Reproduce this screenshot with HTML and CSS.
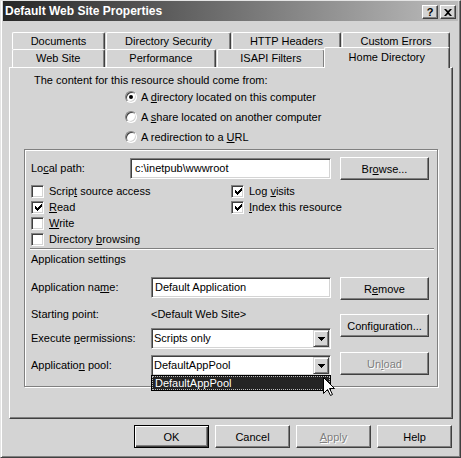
FILE: index.html
```html
<!DOCTYPE html>
<html lang="en">
<head>
    <meta charset="UTF-8">
    <title>Default Web Site Properties</title>
    <link rel="stylesheet" href="styles.css">
</head>
<body>
    <div class="window">
        <div class="titlebar">
            <span class="title">Default Web Site Properties</span>
            <div class="caption-buttons">
                <button class="caption-btn">?</button>
                <button class="caption-btn">
                    <svg width="8" height="7" viewBox="0 0 8 7"><path d="M0 0h2l2 2 2-2h2L5 3.5 8 7H6L4 5 2 7H0l3-3.5z" fill="#000"/></svg>
                </button>
            </div>
        </div>

        <div class="dialog">
            <div class="tabs">
                <div class="tab-row back">
                    <div class="tab tab-documents">Documents</div>
                    <div class="tab tab-security">Directory Security</div>
                    <div class="tab tab-headers">HTTP Headers</div>
                    <div class="tab tab-errors">Custom Errors</div>
                </div>
                <div class="tab-row front">
                    <div class="tab tab-website">Web Site</div>
                    <div class="tab tab-performance">Performance</div>
                    <div class="tab tab-isapi">ISAPI Filters</div>
                    <div class="tab tab-home active">Home Directory</div>
                </div>
            </div>

            <div class="panel">
                <p class="intro">The content for this resource should come from:</p>
                <div class="radio-list">
                    <div class="radio-row"><span class="radio checked"></span><span>A <u>d</u>irectory located on this computer</span></div>
                    <div class="radio-row"><span class="radio"></span><span>A <u>s</u>hare located on another computer</span></div>
                    <div class="radio-row"><span class="radio"></span><span>A redirection to a <u>U</u>RL</span></div>
                </div>

                <div class="groupbox">
                    <div class="path-row">
                        <span class="path-label">Lo<u>c</u>al path:</span>
                        <div class="textbox path-input">c:\inetpub\wwwroot</div>
                        <button class="btn side-btn"><span>Br<u>o</u>wse...</span></button>
                    </div>

                    <div class="checks">
                        <div class="check-col">
                            <div class="check-row"><span class="checkbox"></span><span>Scrip<u>t</u> source access</span></div>
                            <div class="check-row"><span class="checkbox checked"><svg width="7" height="7" viewBox="0 0 7 7"><path d="M0 2h1v1h1v1h1V3h1V2h1V1h1V0h1v3H6v1H5v1H4v1H3v1H2V6H1V5H0z" fill="#000"/></svg></span><span><u>R</u>ead</span></div>
                            <div class="check-row"><span class="checkbox"></span><span><u>W</u>rite</span></div>
                            <div class="check-row"><span class="checkbox"></span><span>Directory <u>b</u>rowsing</span></div>
                        </div>
                        <div class="check-col">
                            <div class="check-row"><span class="checkbox checked"><svg width="7" height="7" viewBox="0 0 7 7"><path d="M0 2h1v1h1v1h1V3h1V2h1V1h1V0h1v3H6v1H5v1H4v1H3v1H2V6H1V5H0z" fill="#000"/></svg></span><span>Log <u>v</u>isits</span></div>
                            <div class="check-row"><span class="checkbox checked"><svg width="7" height="7" viewBox="0 0 7 7"><path d="M0 2h1v1h1v1h1V3h1V2h1V1h1V0h1v3H6v1H5v1H4v1H3v1H2V6H1V5H0z" fill="#000"/></svg></span><span><u>I</u>ndex this resource</span></div>
                        </div>
                    </div>

                    <div class="separator"></div>
                    <div class="section-title">Application settings</div>

                    <div class="app-settings">
                        <div class="app-fields">
                            <div class="field-row row-name">
                                <span class="field-label">Application na<u>m</u>e:</span>
                                <div class="textbox field-control">Default Application</div>
                            </div>
                            <div class="field-row row-start">
                                <span class="field-label">Starting point:</span>
                                <span class="field-value">&lt;Default Web Site&gt;</span>
                            </div>
                            <div class="field-row row-exec">
                                <span class="field-label">Execute <u>p</u>ermissions:</span>
                                <div class="combo field-control">
                                    <span class="combo-text">Scripts only</span>
                                    <span class="combo-btn"><svg width="7" height="4" viewBox="0 0 7 4"><path d="M0 0h7v1H6v1H5v1H4v1H3V3H2V2H1V1H0z" fill="#000"/></svg></span>
                                </div>
                            </div>
                            <div class="field-row row-pool">
                                <span class="field-label">Applicatio<u>n</u> pool:</span>
                                <div class="combo field-control open">
                                    <span class="combo-text">DefaultAppPool</span>
                                    <span class="combo-btn"><svg width="7" height="4" viewBox="0 0 7 4"><path d="M0 0h7v1H6v1H5v1H4v1H3V3H2V2H1V1H0z" fill="#000"/></svg></span>
                                    <div class="dropdown">
                                        <div class="dropdown-item">DefaultAppPool</div>
                                    </div>
                                    <svg class="cursor" width="12" height="20" viewBox="0 0 12 20"><path d="M0.5 0.5V16.5L4.5 12.5L7.5 18.5L9.5 17.5L6.5 11.5H11.5Z" fill="#fff" stroke="#000"/></svg>
                                </div>
                            </div>
                        </div>
                        <div class="app-buttons">
                            <button class="btn side-btn"><span>R<u>e</u>move</span></button>
                            <button class="btn side-btn btn-config"><span>Confi<u>g</u>uration...</span></button>
                            <button class="btn side-btn btn-unload disabled"><span>Un<u>l</u>oad</span></button>
                        </div>
                    </div>
                </div>
            </div>

            <div class="dialog-buttons">
                <button class="btn dlg-btn default">OK</button>
                <button class="btn dlg-btn">Cancel</button>
                <button class="btn dlg-btn disabled"><span><u>A</u>pply</span></button>
                <button class="btn dlg-btn">Help</button>
            </div>
        </div>
    </div>
</body>
</html>
```

FILE: styles.css
```css
:root {
    --face: #d4d4d4;
    --shadow: #808080;
    --dark: #404040;
    --light: #ffffff;
    --highlight: #242424;
}

* {
    box-sizing: border-box;
    margin: 0;
    padding: 0;
}

body {
    font-family: "Liberation Sans", Arial, sans-serif;
    font-size: 11px;
    line-height: 13px;
    color: #000;
    background: var(--face);
}

u {
    text-decoration: underline;
    text-underline-offset: 1px;
}

.window {
    width: 461px;
    height: 458px;
    background: var(--face);
    border: 1px solid;
    border-color: #e4e4e4 var(--dark) var(--dark) #e4e4e4;
    padding: 0 2px 2px;
    box-shadow: inset 1px 0 var(--light), inset -1px -1px var(--shadow);
}

/* title bar */
.titlebar {
    height: 20px;
    display: flex;
    align-items: center;
    justify-content: space-between;
    padding: 0 2px;
    background: linear-gradient(to right, #262626, #bcbcbc);
}

.title {
    color: #fff;
    font-weight: bold;
    font-size: 12px;
}

.caption-buttons {
    display: flex;
    gap: 2px;
    margin-top: 2px;
}

.caption-btn {
    width: 16px;
    height: 14px;
    display: flex;
    align-items: center;
    justify-content: center;
    background: var(--face);
    border: 1px solid;
    border-color: var(--light) var(--dark) var(--dark) var(--light);
    box-shadow: inset -1px -1px var(--shadow);
    font: bold 11px "Liberation Sans", Arial, sans-serif;
    color: #000;
}

/* tabs */
.dialog {
    padding: 11px 5px 0 6px;
}

.tabs {
    padding: 0 3px;
}

.tab-row {
    display: flex;
}

.tab {
    display: flex;
    align-items: center;
    justify-content: center;
    height: 18px;
    margin-right: 1px;
    background: var(--face);
    border-top: 1px solid var(--light);
    border-left: 1px solid var(--light);
    border-right: 1px solid var(--dark);
    border-radius: 2px 2px 0 0;
    box-shadow: inset -1px 0 var(--shadow);
}

.tab-row.back .tab {
    height: 17px;
}

.tab-row .tab:last-child {
    margin-right: 0;
}

.tab-documents, .tab-website { width: 93px; }
.tab-security { width: 125px; }
.tab-headers { width: 109px; }
.tab-errors { width: 108px; }
.tab-performance { width: 111px; }
.tab-isapi { width: 108px; }
.tab-home { width: 123px; }

.tab.active {
    position: relative;
    z-index: 1;
    width: 127px;
    height: 21px;
    margin: -2px -2px -1px -2px;
    align-items: flex-start;
    padding-top: 3px;
}

/* property page */
.panel {
    height: 352px;
    border: 1px solid;
    border-color: var(--light) var(--dark) var(--dark) var(--light);
    box-shadow: inset -1px -1px var(--shadow);
    padding: 6px 14px 0 14px;
}

.intro {
    margin-left: 10px;
}

.radio-list {
    padding-left: 101px;
}

.radio-row {
    height: 20px;
    display: flex;
    align-items: center;
    gap: 4px;
}

.radio {
    width: 12px;
    height: 12px;
    border-radius: 50%;
    background: #fff;
    border: 1px solid;
    border-color: var(--shadow) var(--light) var(--light) var(--shadow);
    box-shadow: inset 1px 1px var(--dark), inset -1px -1px var(--face);
    display: flex;
    align-items: center;
    justify-content: center;
}

.radio.checked::after {
    content: "";
    width: 4px;
    height: 4px;
    border-radius: 50%;
    background: #000;
}

.groupbox {
    height: 238px;
    margin-top: 2px;
    border: 1px solid var(--shadow);
    box-shadow: inset 1px 1px var(--light), 1px 1px var(--light);
    padding: 7px 0 0 6px;
}

.path-row {
    display: flex;
    align-items: center;
    height: 23px;
}

.path-label {
    width: 99px;
}

.textbox {
    height: 21px;
    display: flex;
    align-items: center;
    padding: 0 3px;
    background: #fff;
    border: 1px solid;
    border-color: var(--shadow) var(--light) var(--light) var(--shadow);
    box-shadow: inset 1px 1px var(--dark), inset -1px -1px var(--face);
}

.path-input {
    width: 201px;
    padding-left: 4px;
    margin-right: 9px;
}

.btn {
    display: flex;
    align-items: center;
    justify-content: center;
    height: 23px;
    background: var(--face);
    border: 1px solid;
    border-color: var(--light) var(--dark) var(--dark) var(--light);
    box-shadow: inset -1px -1px var(--shadow);
    font: 11px "Liberation Sans", Arial, sans-serif;
    color: #000;
}

.btn.disabled {
    color: var(--shadow);
    text-shadow: 1px 1px 0 var(--light);
}

.btn.default {
    border-color: #000;
    box-shadow: inset 1px 1px var(--light), inset -1px -1px var(--dark), inset -2px -2px var(--shadow);
}

.side-btn {
    width: 89px;
}

.checks {
    display: grid;
    grid-template-columns: 200px 1fr;
    margin-top: 3px;
}

.check-row {
    height: 16px;
    display: flex;
    align-items: center;
    gap: 5px;
}

.checkbox {
    width: 13px;
    height: 13px;
    flex: none;
    display: flex;
    align-items: center;
    justify-content: center;
    background: #fff;
    border: 1px solid;
    border-color: var(--shadow) var(--light) var(--light) var(--shadow);
    box-shadow: inset 1px 1px var(--dark), inset -1px -1px var(--face);
}

.checkbox svg {
    display: block;
    margin: 1px 0 0 1px;
}

.separator {
    height: 2px;
    margin: 1px 3px 0 -1px;
    border-top: 1px solid var(--shadow);
    border-bottom: 1px solid var(--light);
}

.section-title {
    margin-top: 3px;
}

.app-settings {
    display: flex;
    gap: 9px;
    margin-top: 11px;
}

.app-fields {
    width: 300px;
}

.field-row {
    display: flex;
    align-items: center;
    height: 21px;
}

.row-start { margin-top: 6px; }
.row-exec { margin-top: 3px; }
.row-pool { margin-top: 6px; }

.field-label {
    width: 120px;
}

.field-control {
    width: 180px;
}

.combo {
    position: relative;
    height: 21px;
    display: flex;
    padding: 1px;
    background: #fff;
    border: 1px solid;
    border-color: var(--shadow) var(--light) var(--light) var(--shadow);
    box-shadow: inset 1px 1px var(--dark), inset -1px -1px var(--face);
}

.combo-text {
    flex: 1;
    display: flex;
    align-items: center;
    padding-left: 1px;
}

.combo-btn {
    width: 16px;
    height: 17px;
    display: flex;
    align-items: center;
    justify-content: center;
    background: var(--face);
    border: 1px solid;
    border-color: var(--face) var(--dark) var(--dark) var(--face);
    box-shadow: inset 1px 1px var(--light), inset -1px -1px var(--shadow);
}

.dropdown {
    position: absolute;
    top: 100%;
    left: -1px;
    right: -1px;
    height: 16px;
    border: 1px solid #000;
    background: #fff;
}

.dropdown-item {
    height: 14px;
    display: flex;
    align-items: center;
    padding-left: 2px;
    background: var(--highlight);
    color: #fff;
    border: 1px dotted #bdbdbd;
}

.cursor {
    position: absolute;
    left: 171px;
    top: 21px;
    z-index: 2;
}

.app-buttons {
    display: flex;
    flex-direction: column;
}

.btn-config { margin-top: 14px; }
.btn-unload { margin-top: 15px; }

/* bottom buttons */
.dialog-buttons {
    display: flex;
    justify-content: flex-end;
    gap: 6px;
    margin: 6px 1px 0 0;
}

.dlg-btn {
    width: 75px;
}
```
